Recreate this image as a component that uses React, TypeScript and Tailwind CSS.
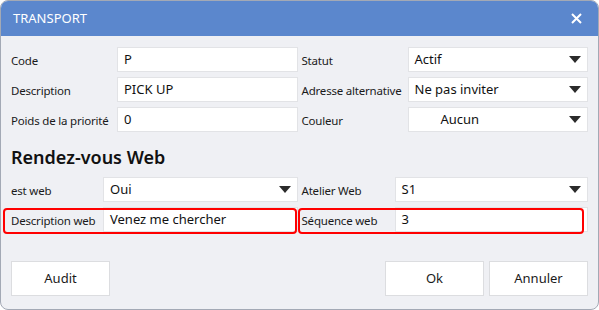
import React from 'react';

const Arrow: React.FC = () => (
    <svg width="12" height="7" viewBox="0 0 12 7" className="shrink-0">
        <path d="M0 0 H12 L6 7 Z" fill="#2b2b2b" />
    </svg>
);

const Field: React.FC<{ value: string; select?: boolean; indent?: string }> = ({ value, select, indent }) => (
    <div className="flex-1 h-[25px] bg-white border border-[#e2e3e6] flex items-center pl-[6px] pr-[6px] text-[13px] text-[#111]">
        <span className={'flex-1 ' + (indent ?? '')}>{value}</span>
        {select && <Arrow />}
    </div>
);

const Row: React.FC<{ label: string; labelW: string; value: string; select?: boolean; indent?: string }> = ({ label, labelW, value, select, indent }) => (
    <div className="flex items-center h-[25px]">
        <div className={labelW + ' shrink-0 whitespace-nowrap text-[11.5px] tracking-[-0.2px] text-[#1a1a1a] pt-[3px]'}>{label}</div>
        <Field value={value} select={select} indent={indent} />
    </div>
);

const Button: React.FC<{ label: string }> = ({ label }) => (
    <button className="w-[99px] h-[35px] bg-white border border-[#dcdde0] text-[13px] text-[#1a1a1a]">{label}</button>
);

export default function App() {
    return (
        <div className="w-[599px] h-[310px] bg-[#eff0f4] border border-[#a3a9b5] rounded-[8px] overflow-hidden flex flex-col" style={{ fontFamily: '"Noto Sans", "Open Sans", sans-serif' }}>
            <div className="h-[35px] bg-[#5b87cd] flex items-center justify-between pl-[12px] pr-[16px] shrink-0">
                <span className="text-white text-[13px]">TRANSPORT</span>
                <svg width="11" height="11" viewBox="0 0 11 11">
                    <path d="M1 1 L10 10 M10 1 L1 10" stroke="#fff" strokeWidth="2" />
                </svg>
            </div>

            <div className="flex gap-[4px] pl-[10px] pr-[10px] pt-[11px]">
                <div className="flex-1 flex flex-col gap-[5px]">
                    <Row label="Code" labelW="w-[106px]" value="P" />
                    <Row label="Description" labelW="w-[106px]" value="PICK UP" />
                    <Row label="Poids de la priorité" labelW="w-[106px]" value="0" />
                </div>
                <div className="flex-1 flex flex-col gap-[5px]">
                    <Row label="Statut" labelW="w-[106px]" value="Actif" select />
                    <Row label="Adresse alternative" labelW="w-[106px]" value="Ne pas inviter" select />
                    <Row label="Couleur" labelW="w-[106px]" value="Aucun" select indent="pl-[26px]" />
                </div>
            </div>

            <div className="pl-[10px] pt-[12px] h-[45px] text-[18px] font-semibold text-[#111]">Rendez-vous Web</div>

            <div className="relative flex gap-[4px] pl-[10px] pr-[10px]">
                <div className="flex-1 flex flex-col gap-[5px]">
                    <Row label="est web" labelW="w-[92px]" value="Oui" select />
                    <Row label="Description web" labelW="w-[92px]" value="Venez me chercher" />
                </div>
                <div className="flex-1 flex flex-col gap-[5px]">
                    <Row label="Atelier Web" labelW="w-[93px]" value="S1" select />
                    <Row label="Séquence web" labelW="w-[93px]" value="3" />
                </div>
                <div className="absolute left-[2px] top-[31px] w-[294px] h-[26px] border-2 border-[#ff0000] rounded-[4px]" />
                <div className="absolute left-[297px] top-[31px] w-[286px] h-[26px] border-2 border-[#ff0000] rounded-[4px]" />
            </div>

            <div className="flex items-center pl-[10px] pr-[10px] pt-[29px]">
                <Button label="Audit" />
                <div className="flex-1" />
                <div className="flex gap-[5px]">
                    <Button label="Ok" />
                    <Button label="Annuler" />
                </div>
            </div>
        </div>
    );
}
